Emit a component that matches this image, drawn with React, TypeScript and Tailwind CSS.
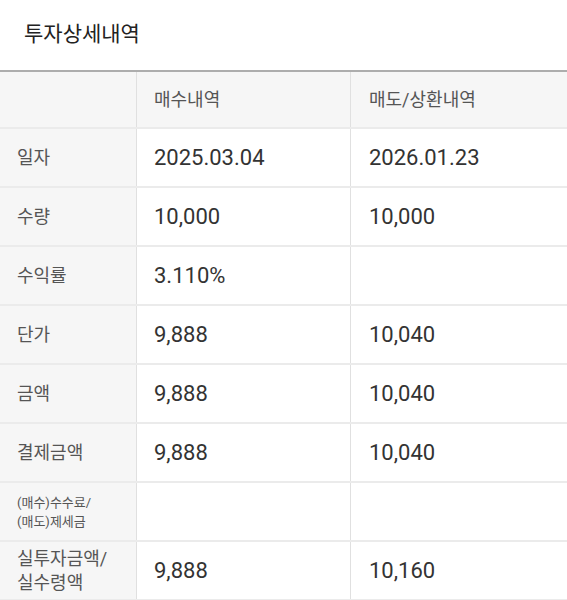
import React from "react";

const rows = [
  { label: "일자", buy: "2025.03.04", sell: "2026.01.23" },
  { label: "수량", buy: "10,000", sell: "10,000" },
  { label: "수익률", buy: "3.110%", sell: "" },
  { label: "단가", buy: "9,888", sell: "10,040" },
  { label: "금액", buy: "9,888", sell: "10,040" },
  { label: "결제금액", buy: "9,888", sell: "10,040" },
  { label: "(매수)수수료/\n(매도)제세금", buy: "", sell: "", small: true },
  { label: "실투자금액/\n실수령액", buy: "9,888", sell: "10,160" },
];

const font = { fontFamily: 'Roboto, "Noto Sans CJK KR", sans-serif' };

export default function App() {
  return (
    <div className="w-[567px] h-[600px] overflow-hidden bg-white" style={font}>
      <div className="h-[70px] flex items-center pl-6">
        <h1 className="text-[21px] text-[#222]">투자상세내역</h1>
      </div>
      <div className="border-t-2 border-[#adadad]">
        {/* header */}
        <div className="grid grid-cols-[137px_214px_1fr] h-[57px] bg-[#f6f6f6] border-b-2 border-[#ebebeb]">
          <div className="border-r border-[#e0e0e0]" />
          <div className="border-r border-[#e0e0e0] flex items-center pl-[17px] text-[18px] text-[#555]">
            매수내역
          </div>
          <div className="flex items-center pl-[18px] text-[18px] text-[#555]">
            매도/상환내역
          </div>
        </div>
        {rows.map((r, i) => (
          <div
            key={i}
            className="grid grid-cols-[137px_214px_1fr] h-[59px] border-b-2 border-[#ebebeb]"
          >
            <div
              className={
                "bg-[#f6f6f6] border-r border-[#e0e0e0] flex items-center pl-[17px] text-[#555] whitespace-pre-line " +
                (r.small
                  ? "text-[13px] leading-[19px]"
                  : "text-[18px] leading-[24px]")
              }
            >
              {r.label}
            </div>
            <div className="border-r border-[#e0e0e0] flex items-center pl-[17px] text-[22px] text-[#333]">
              {r.buy}
            </div>
            <div className="flex items-center pl-[18px] text-[22px] text-[#333]">
              {r.sell}
            </div>
          </div>
        ))}
      </div>
    </div>
  );
}
